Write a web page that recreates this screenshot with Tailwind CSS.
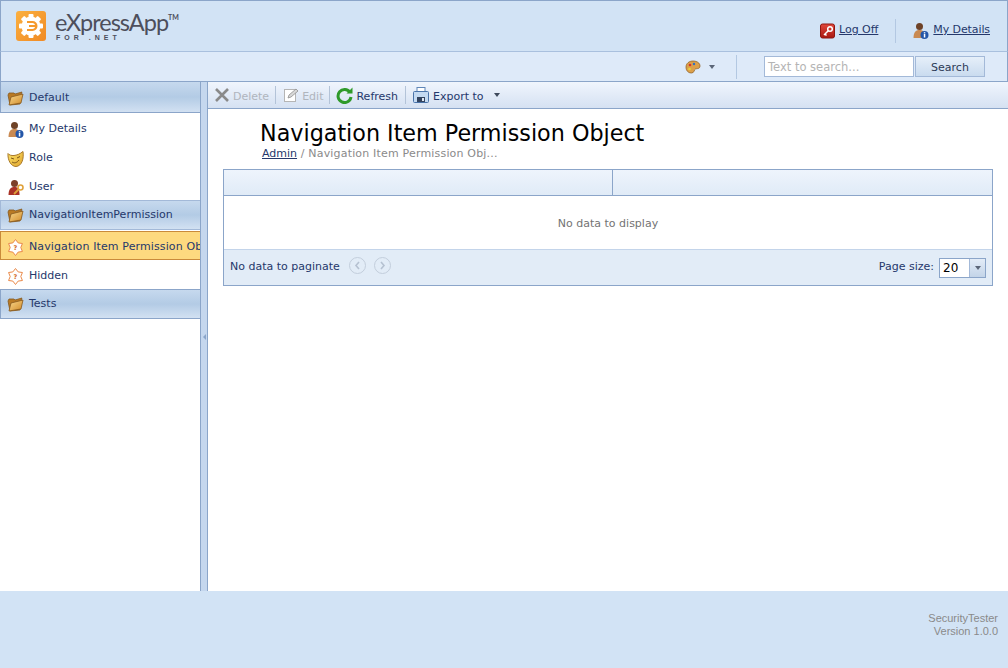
<!DOCTYPE html>
<html lang="en">
<head>
    <meta charset="UTF-8">
    <title>Navigation Item Permission Object</title>
    <script src="https://cdn.jsdelivr.net/npm/@tailwindcss/browser@4"></script>
</head>
<body class="w-[1008px] h-[668px] overflow-hidden bg-white font-['DejaVu_Sans',sans-serif] text-[11px] text-[#25386b]">

    <svg width="0" height="0" class="absolute">
        <defs>
            <linearGradient id="folderFront" x1="0" y1="0" x2="1" y2="1"><stop offset="0" stop-color="#f9d98f"/><stop offset="1" stop-color="#d18a28"/></linearGradient>
            <linearGradient id="logOff" x1="0" y1="0" x2="0" y2="1"><stop offset="0" stop-color="#e2483c"/><stop offset="1" stop-color="#a81810"/></linearGradient>
            <linearGradient id="logoBg" x1="0" y1="0" x2="1" y2="1"><stop offset="0" stop-color="#fbb040"/><stop offset="1" stop-color="#f08a24"/></linearGradient>
            <linearGradient id="roleFace" x1="0" y1="0" x2="1" y2="1"><stop offset="0" stop-color="#fbe36a"/><stop offset="1" stop-color="#e2a52c"/></linearGradient>
        </defs>
    </svg>

    <!-- Header -->
    <div class="h-[52px] bg-[#d2e3f5] border border-[#8ba5c9] border-b-[#a9c0de] flex items-center justify-between pl-[15px] pr-[17px]">
        <div class="flex items-center">
            <svg class="shrink-0" width="30" height="30" viewBox="0 0 30 30">
                <rect width="30" height="30" rx="3" fill="url(#logoBg)"/>
                <g fill="#fff">
                    <circle cx="15" cy="15" r="9.5"/>
                    <rect x="12.5" y="3" width="5" height="24" rx="1"/>
                    <rect x="3" y="12.5" width="24" height="5" rx="1"/>
                    <rect x="12.5" y="3" width="5" height="24" rx="1" transform="rotate(45 15 15)"/>
                    <rect x="12.5" y="3" width="5" height="24" rx="1" transform="rotate(-45 15 15)"/>
                </g>
                <path d="M11 10h5.500a5 5 0 0 1 0 10H11v-2h5.500a3 3 0 0 0 2.600-2H13v-2h6.100a3 3 0 0 0-2.600-2H11z" fill="#f59a2e"/>
            </svg>
            <div class="ml-[9px] -mt-[2px]">
                <div class="flex items-start font-['Lato',sans-serif] text-[#4d4f5c] leading-[24px]">
                    <span class="text-[23.500px] tracking-[-1px]">eXpressApp</span><span class="text-[7px] font-bold leading-[14px]">TM</span>
                </div>
                <div class="font-['Liberation_Sans',sans-serif] font-bold text-[7px] leading-[7px] tracking-[4px] text-[#4d4f5c] pl-[1px]">FOR .NET</div>
            </div>
        </div>
        <div class="flex items-center mt-[9px]">
            <svg class="shrink-0" width="16" height="16" viewBox="0 0 16 16">
                <rect x="0.500" y="1" width="14" height="14" rx="2" fill="url(#logOff)" stroke="#8f1610"/>
                <circle cx="10" cy="6" r="2.300" fill="none" stroke="#fff" stroke-width="1.500"/>
                <path d="M8.500 7.500 4 12M5 11l1.500 1.500" stroke="#fff" stroke-width="1.500" fill="none"/>
            </svg>
            <a class="ml-[3px] underline">Log Off</a>
            <div class="w-px h-6 bg-[#b3c8e2] mx-[17px]"></div>
            <svg class="shrink-0" width="16" height="18" viewBox="0 0 16 18">
                <circle cx="6.500" cy="4.500" r="3.500" fill="#6e4227"/>
                <path d="M0.500 16c0-5.500 2-8 6-8s5.500 2.500 5.500 8z" fill="#c98a52"/>
                <circle cx="11.500" cy="13" r="4" fill="#2356a8"/>
                <rect x="10.800" y="12" width="1.500" height="3.500" fill="#fff"/>
                <rect x="10.800" y="10.200" width="1.500" height="1.200" fill="#fff"/>
            </svg>
            <a class="ml-[4px] underline tracking-[-0.100px]">My Details</a>
        </div>
    </div>

    <!-- Search bar -->
    <div class="h-[30px] bg-[#deeaf9] border-l border-r border-b border-[#8ba5c9] flex items-center justify-end pr-[22px]">
        <svg class="shrink-0" width="16" height="14" viewBox="0 0 16 14">
            <path d="M1 7c0-3.500 3-6 7-6s7 2 7 5-3 2.500-4.500 3-1 4-4 4C3 13 1 10.500 1 7z" fill="#dca04a" stroke="#8a5a20" stroke-width="0.700"/>
            <circle cx="5" cy="5" r="1.300" fill="#d8322a"/>
            <circle cx="9" cy="4" r="1.200" fill="#2f6fc4"/>
            <circle cx="4.500" cy="9" r="1.300" fill="#e8d23a"/>
        </svg>
        <div class="ml-[8px] w-0 h-0 border-l-[3.500px] border-r-[3.500px] border-t-[4px] border-l-transparent border-r-transparent border-t-[#5b6678]"></div>
        <div class="w-px h-6 bg-[#b3c8e2] ml-[21px] mr-[27px]"></div>
        <div class="w-[150px] h-[21px] bg-white border border-[#a3b9d8] pl-[3px] text-[#b4b4b4] text-[11.500px] leading-[21px]">Text to search...</div>
        <div class="w-[70px] h-[21px] ml-[1px] bg-gradient-to-b from-[#e6eff9] to-[#c9dbef] border border-[#a3b9d8] text-center leading-[21px] text-[#2c3a55]">Search</div>
    </div>

    <!-- Main -->
    <div class="h-[509px] flex">
        <!-- Navigation -->
        <div class="w-[201px] shrink-0 border-r border-[#8ba5c9] bg-white overflow-hidden whitespace-nowrap">
            <div class="h-[31px] pt-[2px] border-l border-b border-[#8ba5c9] bg-gradient-to-b from-[#c6d9ee] via-[#b3cbe5] to-[#d2e1f2] flex items-center pl-[6px]">
                <svg class="shrink-0" width="17" height="16" viewBox="0 0 17 16"><path d="M1 5l1-2h5l1 1 7-2-1 2 1 0-2 10-10 1z" fill="#b97a24" stroke="#86591e" stroke-width="0.800"/><path d="M2 15l2-8 12-3-2 9z" fill="url(#folderFront)" stroke="#86591e" stroke-width="0.800"/></svg>
                <span class="ml-[5px]">Default</span>
            </div>
            <div class="h-[29px] pt-[4px] flex items-center pl-[8px]">
                <svg class="shrink-0" width="16" height="18" viewBox="0 0 16 18"><circle cx="6.500" cy="4.500" r="3.500" fill="#6e4227"/><path d="M0.500 16c0-5.500 2-8 6-8s5.500 2.500 5.500 8z" fill="#c98a52"/><circle cx="11.500" cy="13" r="4" fill="#2356a8"/><rect x="10.800" y="12" width="1.500" height="3.500" fill="#fff"/><rect x="10.800" y="10.200" width="1.500" height="1.200" fill="#fff"/></svg>
                <span class="ml-[5px]">My Details</span>
            </div>
            <div class="h-[29px] pt-[4px] flex items-center pl-[7px]">
                <svg class="shrink-0" width="17" height="16" viewBox="0 0 17 16"><path d="M1 2.500c2 3 9 3 15-2 1 7-1 14.500-7 15C4 15.500 0.500 9 1 2.500z" fill="url(#roleFace)" stroke="#a9792a"/><path d="M4 7l3 1M10 7l3-1.500M5 11c2 1.500 5 1 7-2" stroke="#7a5518" fill="none"/></svg>
                <span class="ml-[5px]">Role</span>
            </div>
            <div class="h-[29px] pt-[4px] flex items-center pl-[8px]">
                <svg class="shrink-0" width="16" height="17" viewBox="0 0 16 17"><circle cx="6.500" cy="4.500" r="3.500" fill="#7c3f28"/><path d="M0.500 16c0-5.500 2-8 6-8s5 2.500 5 8z" fill="#a93226"/><circle cx="12.500" cy="8.500" r="2.500" fill="none" stroke="#e0a23c" stroke-width="1.600"/><path d="M10.500 10.500 6 15" stroke="#e0a23c" stroke-width="1.800"/></svg>
                <span class="ml-[5px]">User</span>
            </div>
            <div class="h-[30px] border-l border-t border-b border-[#a3b9d8] bg-gradient-to-b from-[#c6d9ee] via-[#b3cbe5] to-[#d2e1f2] flex items-center pl-[6px]">
                <svg class="shrink-0" width="17" height="16" viewBox="0 0 17 16"><path d="M1 5l1-2h5l1 1 7-2-1 2 1 0-2 10-10 1z" fill="#b97a24" stroke="#86591e" stroke-width="0.800"/><path d="M2 15l2-8 12-3-2 9z" fill="url(#folderFront)" stroke="#86591e" stroke-width="0.800"/></svg>
                <span class="ml-[5px]">NavigationItemPermission</span>
            </div>
            <div class="h-[29px] pt-[4px] mt-[1px] border-l border-t border-b border-[#c98a3a] bg-[#fdd97f] flex items-center pl-[6px]">
                <svg class="shrink-0" width="17" height="17" viewBox="0 0 17 17"><path d="M8.500.5 11.150 3.910 15.430 4.500 13.800 8.500 15.430 12.500 11.150 13.090 8.500 16.500 5.850 13.090 1.570 12.500 3.200 8.500 1.570 4.500 5.850 3.910z" fill="#fff" stroke="#ea8a4a"/><text x="8.500" y="11" text-anchor="middle" font-size="6.500" font-weight="bold" fill="#d2691e">?</text></svg>
                <span class="ml-[5px] tracking-[0.120px]">Navigation Item Permission Object</span>
            </div>
            <div class="h-[29px] pt-[4px] flex items-center pl-[7px]">
                <svg class="shrink-0" width="17" height="17" viewBox="0 0 17 17"><path d="M8.500.5 11.150 3.910 15.430 4.500 13.800 8.500 15.430 12.500 11.150 13.090 8.500 16.500 5.850 13.090 1.570 12.500 3.200 8.500 1.570 4.500 5.850 3.910z" fill="#fff" stroke="#ea8a4a"/><text x="8.500" y="11" text-anchor="middle" font-size="6.500" font-weight="bold" fill="#d2691e">?</text></svg>
                <span class="ml-[5px]">Hidden</span>
            </div>
            <div class="h-[30px] border-l border-t border-b border-[#8ba5c9] bg-gradient-to-b from-[#c6d9ee] via-[#b3cbe5] to-[#d2e1f2] flex items-center pl-[6px]">
                <svg class="shrink-0" width="17" height="16" viewBox="0 0 17 16"><path d="M1 5l1-2h5l1 1 7-2-1 2 1 0-2 10-10 1z" fill="#b97a24" stroke="#86591e" stroke-width="0.800"/><path d="M2 15l2-8 12-3-2 9z" fill="url(#folderFront)" stroke="#86591e" stroke-width="0.800"/></svg>
                <span class="ml-[5px]">Tests</span>
            </div>
        </div>

        <!-- Splitter -->
        <div class="w-[7px] shrink-0 bg-[#c5d7ee] border-r border-[#8ba5c9] flex items-center justify-center">
            <div class="w-0 h-0 border-t-[3px] border-b-[3px] border-r-[3px] border-t-transparent border-b-transparent border-r-[#8ba5c9]"></div>
        </div>

        <!-- Content -->
        <div class="flex-1 min-w-0">
            <div class="h-[27px] border-b border-[#8ba5c9] bg-gradient-to-b from-[#f0f5fd] to-[#d5e1f2] flex items-center pl-[6px]">
                <svg class="shrink-0" width="16" height="16" viewBox="0 0 16 16"><path d="M2 2l12 12M14 2 2 14" stroke="#8a8a8a" stroke-width="2.600"/></svg>
                <span class="ml-[3px] pt-[4px] text-[#b0b5bd]">Delete</span>
                <div class="w-px h-[18px] bg-[#b3c3d8] ml-[6px] mr-[7px]"></div>
                <svg class="shrink-0" width="16" height="16" viewBox="0 0 16 16"><rect x="1.500" y="2.500" width="11" height="12" fill="#fff" stroke="#b5b5b5"/><path d="M5 11l1-3 7-6 2 2-7 6z" fill="#d8d8d8" stroke="#8f8f8f" stroke-width="0.800"/></svg>
                <span class="ml-[3px] pt-[4px] text-[#b0b5bd]">Edit</span>
                <div class="w-px h-[18px] bg-[#b3c3d8] ml-[6px] mr-[6px]"></div>
                <svg class="shrink-0" width="17" height="17" viewBox="0 0 17 17"><path d="M14 5.500A6.500 6.500 0 1 0 15 10" fill="none" stroke="#2f9a2a" stroke-width="3"/><path d="M10.500 6.500h6v-6z" fill="#2f9a2a"/></svg>
                <span class="ml-[3px] pt-[4px]">Refresh</span>
                <div class="w-px h-[18px] bg-[#b3c3d8] ml-[7px] mr-[7px]"></div>
                <svg class="shrink-0" width="16" height="16" viewBox="0 0 16 16"><rect x="4" y="0.500" width="8" height="6" fill="#fff" stroke="#5f86b8"/><rect x="0.500" y="4.500" width="15" height="11" rx="1" fill="#c4daf2" stroke="#4a74aa"/><rect x="4" y="10" width="8" height="5" fill="#33445f"/><rect x="9" y="11" width="2" height="3" fill="#dfe8f3"/></svg>
                <span class="ml-[4px] pt-[4px]">Export to</span>
                <div class="ml-[10px] w-0 h-0 border-l-[3.500px] border-r-[3.500px] border-t-[4px] border-l-transparent border-r-transparent border-t-[#3f4a5c]"></div>
            </div>

            <div class="pl-[52px] pt-[11px]">
                <h1 class="text-[22.250px] leading-[26px] text-black">Navigation Item Permission Object</h1>
                <div class="pl-[2px] mt-[1px] text-[#8a8a8a] leading-[14px] tracking-[0.180px]"><a class="text-[#25386b] underline tracking-normal">Admin</a> / Navigation Item Permission Obj...</div>
            </div>

            <!-- Grid -->
            <div class="ml-[15px] mr-[15px] mt-[8px] border border-[#8ba5c9]">
                <div class="h-[26px] flex border-b border-[#8ba5c9] bg-gradient-to-b from-[#eef4fc] to-[#e0ebf7]">
                    <div class="w-[389px] border-r border-[#8ba5c9]"></div>
                    <div class="flex-1"></div>
                </div>
                <div class="h-[53px] pt-[4px] flex items-center justify-center text-[#737373] bg-white">No data to display</div>
                <div class="h-[36px] bg-[#e2ecf7] border-t border-[#c3d4ea] flex items-center justify-between pl-[6px] pr-[6px]">
                    <div class="flex items-center">
                        <span>No data to paginate</span>
                        <div class="ml-[9px] mb-[4px] w-[17px] h-[17px] rounded-full border border-[#c3cedc] flex items-center justify-center"><svg width="7" height="9" viewBox="0 0 7 9"><path d="M5 1 2 4.500 5 8" fill="none" stroke="#b5c1d1" stroke-width="1.600"/></svg></div>
                        <div class="ml-[8px] mb-[4px] w-[17px] h-[17px] rounded-full border border-[#c3cedc] flex items-center justify-center"><svg width="7" height="9" viewBox="0 0 7 9"><path d="M2 1 5 4.500 2 8" fill="none" stroke="#b5c1d1" stroke-width="1.600"/></svg></div>
                    </div>
                    <div class="flex items-center">
                        <span>Page size:</span>
                        <div class="ml-[5px] w-[47px] h-[20px] flex border border-[#8ba5c9] bg-white">
                            <span class="flex-1 pl-[3px] text-[12px] leading-[18px] text-black">20</span>
                            <div class="w-[16px] border-l border-[#a3b9d8] bg-gradient-to-b from-[#e3ecf7] to-[#c3d4e8] flex items-center justify-center">
                                <div class="w-0 h-0 border-l-[3.500px] border-r-[3.500px] border-t-[4px] border-l-transparent border-r-transparent border-t-[#5b6678]"></div>
                            </div>
                        </div>
                    </div>
                </div>
            </div>
        </div>
    </div>

    <!-- Footer -->
    <div class="h-[77px] bg-[#d2e3f5] pt-[21px] pr-[10px] text-right text-[#8a8a8a] leading-[13px] font-['Liberation_Sans',sans-serif] text-[11px]">
        <div>SecurityTester</div>
        <div>Version 1.0.0</div>
    </div>
</body>
</html>
